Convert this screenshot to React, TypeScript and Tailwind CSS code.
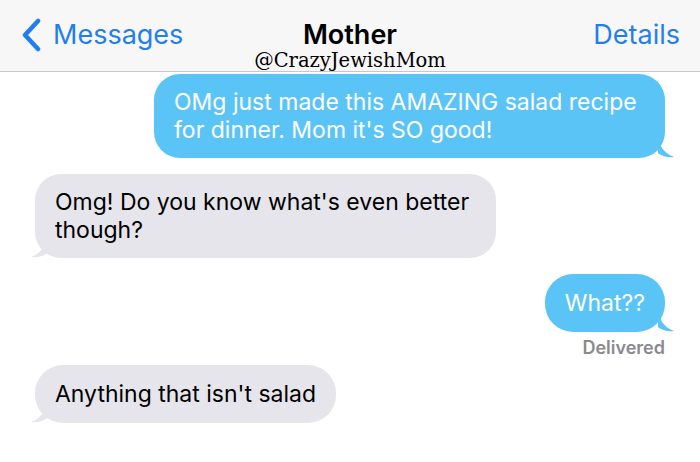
import React from 'react';

const sans = { fontFamily: 'Inter, "Liberation Sans", Arial, sans-serif' };

function OutTail() {
  return (
    <svg className="absolute -right-[13px] bottom-0" width="20" height="24" viewBox="0 0 20 24">
      <path d="M0 0 C1 11 5 19 16 23 C9 24 4 22 -2 18 Z" fill="#5bc4f6" />
    </svg>
  );
}

function InTail() {
  return (
    <svg className="absolute -left-[8px] bottom-0" width="20" height="24" viewBox="0 0 20 24">
      <path d="M20 0 C19 11 15 19 4 23 C11 24 16 22 22 18 Z" fill="#e6e5eb" />
    </svg>
  );
}

export default function App() {
  return (
    <div className="w-[700px] h-[462px] bg-white overflow-hidden" style={sans}>
      {/* Nav bar */}
      <div className="h-[72px] bg-[#f7f7f7] border-b border-[#c8c8cc] grid grid-cols-[1fr_auto_1fr] items-start">
        <div className="flex items-center pl-[20px] pt-[18px] text-[#1f7ff0]">
          <svg width="22" height="34" viewBox="0 0 22 34">
            <path d="M18 3 L5 17 L18 31" fill="none" stroke="#1f7ff0" strokeWidth="4.5" strokeLinecap="round" strokeLinejoin="round" />
          </svg>
          <span className="ml-[11px] text-[27px] leading-[34px]">Messages</span>
        </div>
        <div className="flex flex-col items-center pt-[18px]">
          <span className="text-[27px] leading-[34px] font-semibold text-black">Mother</span>
          <span className="text-[19.5px] leading-[20px] text-black -mt-[1px]" style={{ fontFamily: '"DejaVu Serif", serif' }}>
            @CrazyJewishMom
          </span>
        </div>
        <div className="flex justify-end pr-[20px] pt-[18px]">
          <span className="text-[27px] leading-[34px] text-[#1f7ff0]">Details</span>
        </div>
      </div>

      {/* Messages */}
      <div className="flex flex-col px-[35px] pt-[2px] text-[23px] leading-[28px]">
        <div className="self-end relative w-[511px] bg-[#5bc4f6] text-white rounded-[26px] pl-[20px] pr-[18px] py-[14px]">
          OMg just made this AMAZING salad recipe for dinner. Mom it's SO good!
          <OutTail />
        </div>

        <div className="self-start relative w-[461px] mt-[16px] bg-[#e6e5eb] text-black rounded-[26px] pl-[20px] pr-[20px] py-[14px]">
          Omg! Do you know what's even better though?
          <InTail />
        </div>

        <div className="self-end relative mt-[16px] bg-[#5bc4f6] text-white rounded-[28px] px-[20px] py-[15px]">
          What??
          <OutTail />
        </div>
        <div className="self-end mt-[6px] text-[18px] leading-[20px] font-semibold text-[#8a8a8e]">Delivered</div>

        <div className="self-start relative mt-[7px] bg-[#e6e5eb] text-black rounded-[28px] px-[20px] py-[15px]">
          Anything that isn't salad
          <InTail />
        </div>
      </div>
    </div>
  );
}
